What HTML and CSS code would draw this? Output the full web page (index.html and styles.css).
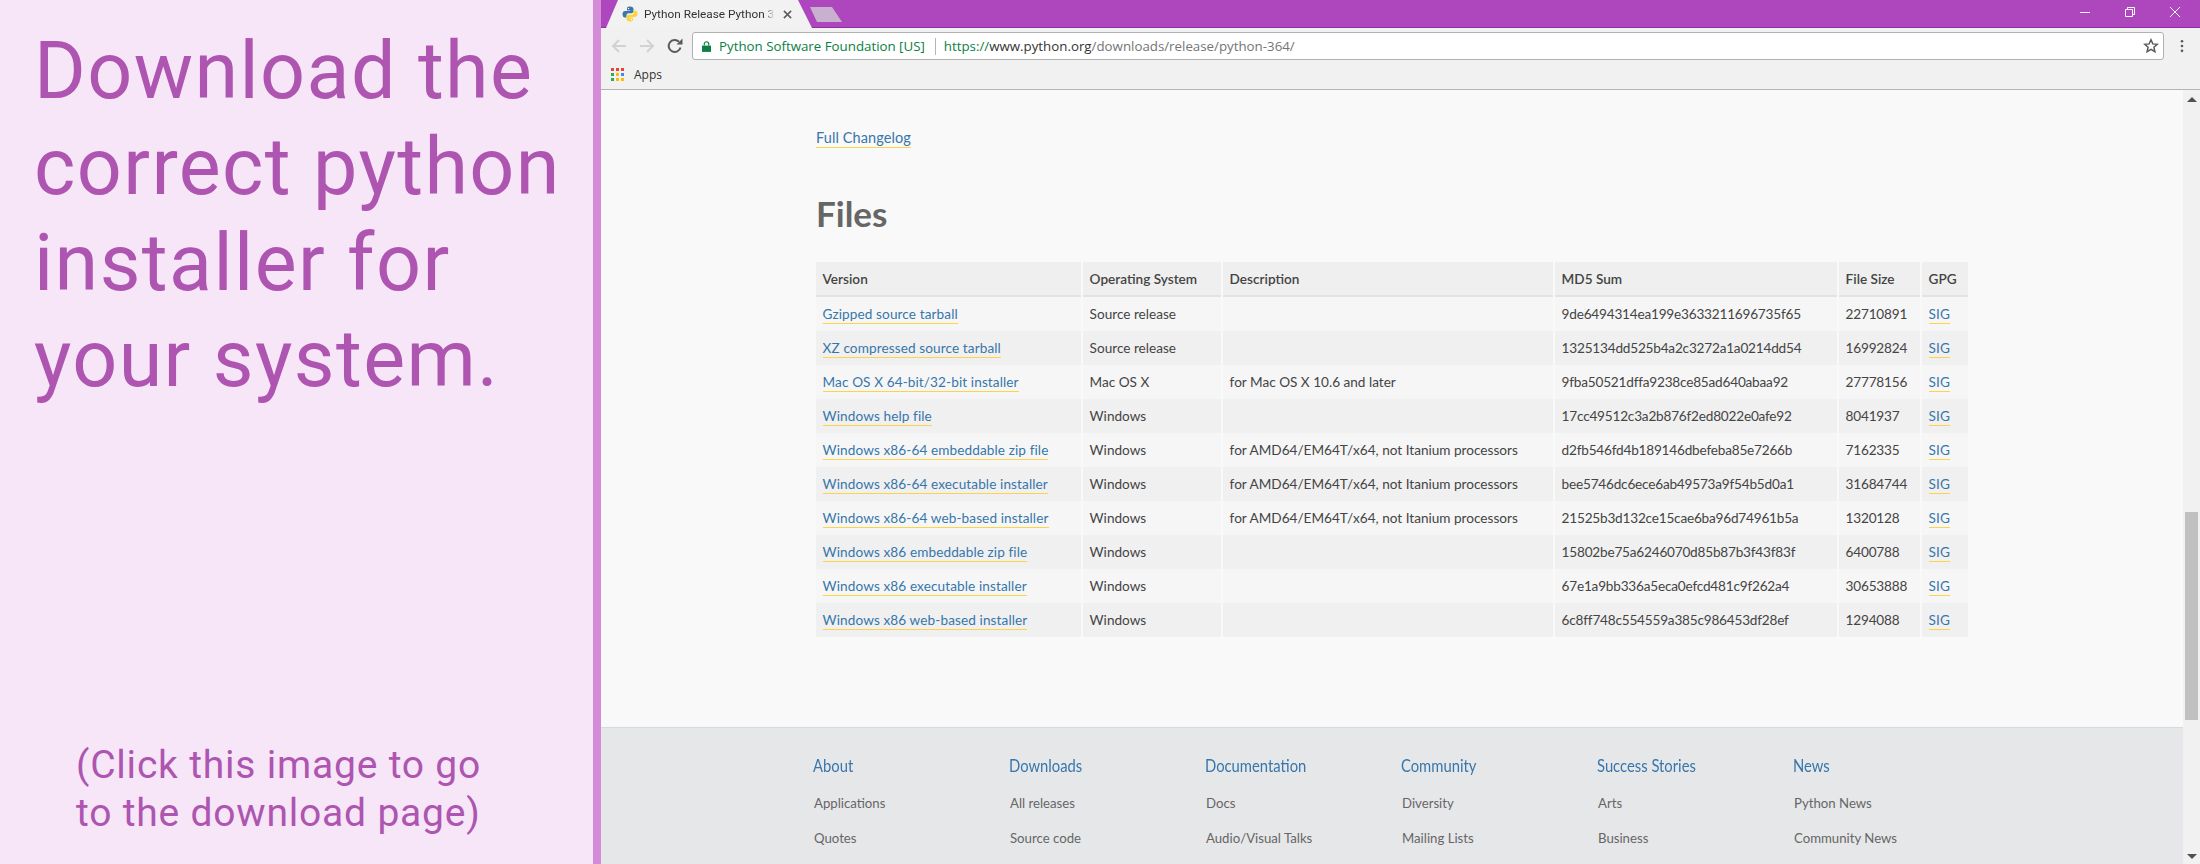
FILE: index.html
```html
<!DOCTYPE html>
<html lang="en">
<head>
<meta charset="utf-8">
<title>Download the correct python installer</title>
<link rel="stylesheet" href="styles.css">
</head>
<body>
<div class="slide">
  <aside class="panel">
    <h1 class="headline">Download the<br>correct python<br>installer for<br>your system.</h1>
    <p class="hint"><span class="hint-a">(Click this image to go</span><br><span class="hint-b">to the download page)</span></p>
  </aside>
  <div class="divider"></div>
  <div class="browser">
    <div class="titlebar">
      <div class="tab">
        <svg class="favicon" viewBox="0 0 16 16"><path fill="#3b77a8" d="M8 .5C4.8.5 5 2 5 2.8V4.5h3.2V5H3C1.600 5 .5 6.200 .5 8.200s1 3.300 2.300 3.300H4.500V9.300C4.500 8 5.500 7.200 6.700 7.200h3C10.800 7.200 11.500 6.400 11.500 5.300V2.800C11.500 1.500 10.300 .5 8 .5z"/><circle cx="6.500" cy="2.500" r=".7" fill="#fff"/><path fill="#fdd344" d="M8 15.500c3.200 0 3-1.500 3-2.300V11.500H7.800V11H13c1.400 0 2.500-1.200 2.500-3.200s-1-3.300-2.300-3.300H11.500V6.700C11.500 8 10.500 8.800 9.300 8.800h-3C5.200 8.800 4.500 9.600 4.500 10.700v2.500C4.500 14.500 5.700 15.500 8 15.500z"/><circle cx="9.500" cy="13.500" r=".7" fill="#fff"/></svg>
        <span class="tab-title">Python Release Python 3</span>
        <svg class="tab-close" viewBox="0 0 10 10"><path d="M1 1l8 8M9 1l-8 8" stroke="#5f5f5f" stroke-width="1.800" fill="none"/></svg>
      </div>
      <div class="newtab"></div>
      <div class="winctl">
        <svg viewBox="0 0 10 10"><path d="M0 5.500h10" stroke="#fff" stroke-width="1" fill="none"/></svg>
        <svg viewBox="0 0 10 10"><path d="M.5 2.500h7v7h-7zM2.500 2.500V.5h7v7h-2" stroke="#fff" stroke-width="1" fill="none"/></svg>
        <svg viewBox="0 0 10 10"><path d="M0 0l10 10M10 0L0 10" stroke="#fff" stroke-width="1" fill="none"/></svg>
      </div>
    </div>
    <div class="toolbar">
      <div class="navrow">
        <svg class="nav-ic" viewBox="0 0 16 16"><path d="M15 8H2M8 2L2 8l6 6" stroke="#d2d2d2" stroke-width="2" fill="none"/></svg>
        <svg class="nav-ic" viewBox="0 0 16 16"><path d="M1 8h13M8 2l6 6-6 6" stroke="#d2d2d2" stroke-width="2" fill="none"/></svg>
        <svg class="nav-ic" viewBox="0 0 16 16"><path d="M13.500 9.500A6 6 0 1 1 12 3.800" stroke="#5a5a5a" stroke-width="2" fill="none"/><path d="M9.500 6.500h6v-6z" fill="#5a5a5a"/></svg>
        <div class="omnibox">
          <svg class="lock" viewBox="0 0 10 12"><path d="M0 5h10v7H0z" fill="#0b8043"/><path d="M2.500 5V3.200a2.500 2.500 0 0 1 5 0V5" stroke="#0b8043" stroke-width="1.300" fill="none"/></svg>
          <span class="ev">Python Software Foundation [US]</span>
          <span class="sep"></span>
          <span class="url"><span class="ev">https://</span>www.python.org<span class="path">/downloads/release/python-364/</span></span>
          <svg class="star" viewBox="0 0 16 16"><path d="M8 1.800l1.800 4.100 4.400.4-3.300 2.900 1 4.400L8 11.300l-3.900 2.300 1-4.400L1.800 6.300l4.400-.4z" stroke="#5a5a5a" stroke-width="1.500" fill="none"/></svg>
        </div>
        <svg class="menu" viewBox="0 0 4 16"><circle cx="2" cy="2.500" r="1.500" fill="#5a5a5a"/><circle cx="2" cy="8" r="1.500" fill="#5a5a5a"/><circle cx="2" cy="13.500" r="1.500" fill="#5a5a5a"/></svg>
      </div>
      <div class="bookmarks">
        <svg class="apps" viewBox="0 0 13 13">
          <rect x="0" width="3" height="3" fill="#ea4335"/><rect x="5" width="3" height="3" fill="#ea4335"/><rect x="10" width="3" height="3" fill="#ea4335"/>
          <rect x="0" y="5" width="3" height="3" fill="#34a853"/><rect x="5" y="5" width="3" height="3" fill="#fbbc05"/><rect x="10" y="5" width="3" height="3" fill="#4285f4"/>
          <rect x="0" y="10" width="3" height="3" fill="#34a853"/><rect x="5" y="10" width="3" height="3" fill="#fbbc05"/><rect x="10" y="10" width="3" height="3" fill="#fbbc05"/>
        </svg>
        <span>Apps</span>
      </div>
    </div>
    <div class="viewport">
      <div class="page">
        <main class="content">
          <p class="changelog"><a class="lnk">Full Changelog</a></p>
          <h2 class="files">Files</h2>
          <table class="ftable">
            <colgroup><col class="c1"><col class="c2"><col class="c3"><col class="c4"><col class="c5"><col class="c6"></colgroup>
            <thead><tr><th>Version</th><th>Operating System</th><th>Description</th><th>MD5 Sum</th><th>File Size</th><th>GPG</th></tr></thead>
            <tbody>
              <tr><td><a class="lnk">Gzipped source tarball</a></td><td>Source release</td><td></td><td class="num">9de6494314ea199e3633211696735f65</td><td class="num">22710891</td><td><a class="lnk">SIG</a></td></tr>
              <tr><td><a class="lnk">XZ compressed source tarball</a></td><td>Source release</td><td></td><td class="num">1325134dd525b4a2c3272a1a0214dd54</td><td class="num">16992824</td><td><a class="lnk">SIG</a></td></tr>
              <tr><td><a class="lnk">Mac OS X 64-bit/32-bit installer</a></td><td>Mac OS X</td><td>for Mac OS X 10.6 and later</td><td class="num">9fba50521dffa9238ce85ad640abaa92</td><td class="num">27778156</td><td><a class="lnk">SIG</a></td></tr>
              <tr><td><a class="lnk">Windows help file</a></td><td>Windows</td><td></td><td class="num">17cc49512c3a2b876f2ed8022e0afe92</td><td class="num">8041937</td><td><a class="lnk">SIG</a></td></tr>
              <tr><td><a class="lnk">Windows x86-64 embeddable zip file</a></td><td>Windows</td><td>for AMD64/EM64T/x64, not Itanium processors</td><td class="num">d2fb546fd4b189146dbefeba85e7266b</td><td class="num">7162335</td><td><a class="lnk">SIG</a></td></tr>
              <tr><td><a class="lnk">Windows x86-64 executable installer</a></td><td>Windows</td><td>for AMD64/EM64T/x64, not Itanium processors</td><td class="num">bee5746dc6ece6ab49573a9f54b5d0a1</td><td class="num">31684744</td><td><a class="lnk">SIG</a></td></tr>
              <tr><td><a class="lnk">Windows x86-64 web-based installer</a></td><td>Windows</td><td>for AMD64/EM64T/x64, not Itanium processors</td><td class="num">21525b3d132ce15cae6ba96d74961b5a</td><td class="num">1320128</td><td><a class="lnk">SIG</a></td></tr>
              <tr><td><a class="lnk">Windows x86 embeddable zip file</a></td><td>Windows</td><td></td><td class="num">15802be75a6246070d85b87b3f43f83f</td><td class="num">6400788</td><td><a class="lnk">SIG</a></td></tr>
              <tr><td><a class="lnk">Windows x86 executable installer</a></td><td>Windows</td><td></td><td class="num">67e1a9bb336a5eca0efcd481c9f262a4</td><td class="num">30653888</td><td><a class="lnk">SIG</a></td></tr>
              <tr><td><a class="lnk">Windows x86 web-based installer</a></td><td>Windows</td><td></td><td class="num">6c8ff748c554559a385c986453df28ef</td><td class="num">1294088</td><td><a class="lnk">SIG</a></td></tr>
            </tbody>
          </table>
        </main>
        <footer class="sitefoot">
          <div class="fcol"><h3>About</h3><p>Applications</p><p>Quotes</p></div>
          <div class="fcol"><h3>Downloads</h3><p>All releases</p><p>Source code</p></div>
          <div class="fcol"><h3>Documentation</h3><p>Docs</p><p>Audio/Visual Talks</p></div>
          <div class="fcol"><h3>Community</h3><p>Diversity</p><p>Mailing Lists</p></div>
          <div class="fcol"><h3>Success Stories</h3><p>Arts</p><p>Business</p></div>
          <div class="fcol"><h3>News</h3><p>Python News</p><p>Community News</p></div>
        </footer>
      </div>
      <div class="scrollbar">
        <div class="sb-up"></div>
        <div class="sb-track"><div class="sb-thumb"></div></div>
        <div class="sb-down"></div>
      </div>
    </div>
  </div>
</div>
</body>
</html>
```

FILE: styles.css
```css
* { box-sizing: border-box; }
html, body { margin: 0; padding: 0; height: 100%; overflow: hidden; }
.slide { display: flex; width: 2200px; height: 864px; overflow: hidden; font-family: "Lato", sans-serif; }

.panel { width: 593px; flex: none; background: #f7e6f7; color: #ad55b0; font-family: "Roboto", sans-serif; display: flex; flex-direction: column; justify-content: space-between; }
.headline { margin: 23px 0 0 34px; font-weight: 400; font-size: 79px; line-height: 96px; letter-spacing: 1.4px; }
.hint { margin: 0 0 27px 76px; font-size: 39px; line-height: 48px; letter-spacing: 0.8px; }
.divider { width: 8px; flex: none; background: #d48cd9; }

.browser { flex: 1; min-width: 0; display: flex; flex-direction: column; }
.titlebar { height: 28px; flex: none; display: flex; background: #ae46be; border-bottom: 1px solid #8f2fa0; padding-left: 5px; }
.tab { width: 206px; height: 28px; flex: none; background: #f2f2f2; clip-path: polygon(0 100%, 12px 0, 192px 0, 206px 100%); display: flex; align-items: center; padding-left: 16px; }
.favicon { width: 16px; height: 16px; flex: none; }
.tab-title { width: 131px; margin-left: 6px; font: 11.8px "Roboto", sans-serif; color: #333; white-space: nowrap; -webkit-mask-image: linear-gradient(90deg, #000 92%, transparent); mask-image: linear-gradient(90deg, #000 92%, transparent); }
.tab-close { width: 9px; height: 9px; margin-left: 8px; flex: none; }
.newtab { width: 32px; height: 15px; margin: 7px 0 0 -2px; background: #c9b0cf; clip-path: polygon(0 0, 22px 0, 32px 100%, 7px 100%); }
.winctl { margin-left: auto; display: flex; gap: 35px; padding: 7px 20px 0 0; }
.winctl svg { width: 10px; height: 10px; }

.toolbar { flex: none; background: #f1f1f1; border-bottom: 1px solid #b4b4b4; height: 62px; }
.navrow { display: flex; align-items: center; padding: 4px 0 0 10px; height: 32px; }
.nav-ic { width: 16px; height: 16px; flex: none; margin-right: 12px; }
.nav-ic:nth-child(3) { margin-right: 9px; }
.omnibox { width: 1472px; height: 28px; flex: none; background: #fff; border: 1px solid #b0b0b0; border-radius: 3px; display: flex; align-items: center; padding-left: 9px; font: 13.3px "Open Sans", sans-serif; color: #333; white-space: nowrap; }
.lock { width: 9px; height: 11px; margin-right: 8px; flex: none; }
.ev { color: #0b8043; }
.sep { width: 1px; height: 17px; background: #b5b5b5; margin: 0 8px 0 10px; }
.path { color: #757575; }
.url { flex: 1; }
.star { width: 16px; height: 16px; margin-right: 4px; flex: none; }
.menu { width: 4px; height: 14px; margin-left: 16px; flex: none; }
.bookmarks { display: flex; align-items: center; height: 29px; padding-left: 10px; font: 12px "Open Sans", sans-serif; color: #333; }
.apps { width: 13px; height: 13px; margin-right: 10px; }

.viewport { flex: 1; min-height: 0; display: flex; }
.page { flex: 1; min-width: 0; background: #f9f9f9; display: flex; flex-direction: column; }
.content { height: 637px; flex: none; padding-left: 215px; color: #444; }
.changelog { margin: 0; padding-top: 39px; font-size: 14.5px; line-height: 18px; }
.lnk { color: #3776ab; border-bottom: 1px solid #ffd343; padding-bottom: 1px; letter-spacing: 0.1px; }
.files { margin: 46px 0 0; font-size: 35px; line-height: 40px; font-weight: 700; color: #666; }
.ftable { margin: 29px 0 0 -2px; border-collapse: separate; border-spacing: 2px 0; table-layout: fixed; width: 1156px; font-size: 13.6px; color: #444; }
.c1 { width: 265px; } .c2 { width: 138px; } .c3 { width: 330px; } .c4 { width: 282px; } .c5 { width: 81px; } .c6 { width: 46px; }
.ftable th { height: 35px; padding: 0 0 0 6.600px; text-align: left; font-weight: 600; background: #efefef; border-bottom: 2px solid #e3e3e3; color: #444; }
.ftable td { height: 34px; padding: 0 0 0 6.600px; white-space: nowrap; background: #f6f6f6; }
.ftable tbody tr:nth-child(even) td { background: #f0f0f0; }
.ftable .num { letter-spacing: -0.2px; }

.sitefoot { flex: 1; background: #e6e7e9; border-top: 1px solid #d8dadd; display: flex; padding-left: 212px; overflow: hidden; }
.fcol { width: 196px; flex: none; padding-top: 26px; }
.fcol h3 { margin: 0; font: 400 17px/24px "Lato", sans-serif; color: #3776ab; transform: scaleX(0.87); transform-origin: left center; white-space: nowrap; }
.fcol p { margin: 0; padding-left: 1px; font-size: 13.2px; line-height: 35px; color: #666; }
.fcol h3 + p { margin-top: 8px; }

.scrollbar { width: 17px; flex: none; background: #f1f1f1; display: flex; flex-direction: column; align-items: center; }
.sb-up { width: 0; height: 0; margin-top: 7px; border: 5px solid transparent; border-top: 0; border-bottom: 5px solid #505050; }
.sb-track { flex: 1; width: 100%; padding: 410px 2px 0; }
.sb-thumb { height: 208px; background: #c0c0c0; }
.sb-down { width: 0; height: 0; margin-bottom: 5px; border: 5px solid transparent; border-bottom: 0; border-top: 5px solid #505050; }
```
